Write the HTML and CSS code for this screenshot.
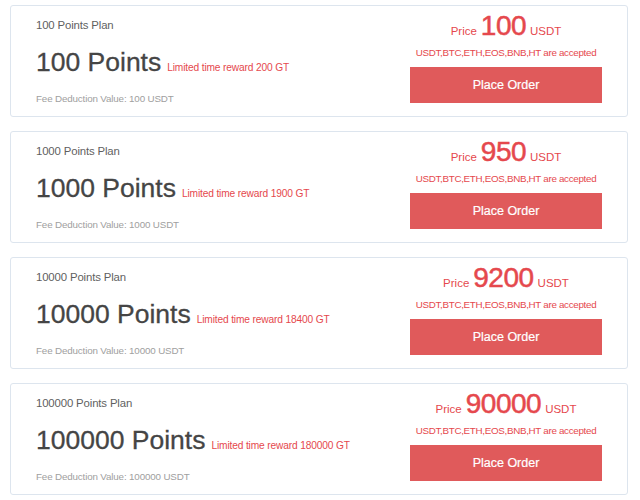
FILE: index.html
```html
<!DOCTYPE html>
<html>
<head>
<meta charset="utf-8">
<link rel="stylesheet" href="styles.css">
</head>
<body>
<div class="list">
  <div class="card">
    <div class="info">
      <div class="plan">100 Points Plan</div>
      <div class="points"><span class="pts">100 Points</span><span class="reward">Limited time reward 200 GT</span></div>
      <div class="fee">Fee Deduction Value: 100 USDT</div>
    </div>
    <div class="buy">
      <div class="price"><span class="lbl">Price</span><span class="num">100</span><span class="lbl">USDT</span></div>
      <div class="accept">USDT,BTC,ETH,EOS,BNB,HT are accepted</div>
      <button class="order">Place Order</button>
    </div>
  </div>
  <div class="card">
    <div class="info">
      <div class="plan">1000 Points Plan</div>
      <div class="points"><span class="pts">1000 Points</span><span class="reward">Limited time reward 1900 GT</span></div>
      <div class="fee">Fee Deduction Value: 1000 USDT</div>
    </div>
    <div class="buy">
      <div class="price"><span class="lbl">Price</span><span class="num">950</span><span class="lbl">USDT</span></div>
      <div class="accept">USDT,BTC,ETH,EOS,BNB,HT are accepted</div>
      <button class="order">Place Order</button>
    </div>
  </div>
  <div class="card">
    <div class="info">
      <div class="plan">10000 Points Plan</div>
      <div class="points"><span class="pts">10000 Points</span><span class="reward">Limited time reward 18400 GT</span></div>
      <div class="fee">Fee Deduction Value: 10000 USDT</div>
    </div>
    <div class="buy">
      <div class="price"><span class="lbl">Price</span><span class="num">9200</span><span class="lbl">USDT</span></div>
      <div class="accept">USDT,BTC,ETH,EOS,BNB,HT are accepted</div>
      <button class="order">Place Order</button>
    </div>
  </div>
  <div class="card">
    <div class="info">
      <div class="plan">100000 Points Plan</div>
      <div class="points"><span class="pts">100000 Points</span><span class="reward">Limited time reward 180000 GT</span></div>
      <div class="fee">Fee Deduction Value: 100000 USDT</div>
    </div>
    <div class="buy">
      <div class="price"><span class="lbl">Price</span><span class="num">90000</span><span class="lbl">USDT</span></div>
      <div class="accept">USDT,BTC,ETH,EOS,BNB,HT are accepted</div>
      <button class="order">Place Order</button>
    </div>
  </div>
</div>
</body>
</html>
```
FILE: styles.css
```css
html, body {
  margin: 0;
  padding: 0;
  background: #ffffff;
  font-family: "Liberation Sans", Arial, sans-serif;
}
.list {
  display: flex;
  flex-direction: column;
  gap: 14px;
  padding: 5px 0 0 10px;
  width: 618px;
}
.card {
  box-sizing: border-box;
  height: 112px;
  border: 1px solid #dde5ee;
  border-radius: 3px;
  display: flex;
  justify-content: space-between;
  background: #fff;
}
.info {
  padding: 11px 0 0 25px;
  display: flex;
  flex-direction: column;
}
.plan {
  font-size: 11.4px;
  letter-spacing: -0.15px;
  line-height: 16px;
  color: #5f5f5f;
}
.points {
  margin-top: 11px;
  line-height: 36px;
  height: 36px;
  white-space: nowrap;
}
.pts {
  font-size: 26.5px;
  color: #454545;
  -webkit-text-stroke: 0.3px #454545;
}
.reward {
  font-size: 10.2px;
  letter-spacing: -0.15px;
  color: #e5484d;
  margin-left: 6px;
}
.fee {
  margin-top: 12px;
  font-size: 9.8px;
  letter-spacing: -0.15px;
  line-height: 14px;
  color: #a0a0a0;
}
.buy {
  width: 192px;
  margin-right: 25px;
  padding-top: 4px;
  display: flex;
  flex-direction: column;
  align-items: center;
}
.price {
  height: 32px;
  line-height: 32px;
  color: #e5484d;
  white-space: nowrap;
}
.lbl {
  font-size: 11.5px;
}
.num {
  font-size: 28px;
  margin: 0 4px;
  letter-spacing: -0.5px;
  -webkit-text-stroke: 0.5px #e5484d;
}
.accept {
  margin-top: 4px;
  font-size: 9.8px;
  letter-spacing: -0.3px;
  line-height: 14px;
  color: #e5484d;
  white-space: nowrap;
}
.order {
  margin-top: 7px;
  width: 192px;
  height: 36px;
  border: none;
  border-radius: 0;
  background: #e05a5b;
  color: #fff;
  font-family: "Liberation Sans", Arial, sans-serif;
  font-size: 12.5px;
  -webkit-text-stroke: 0.2px #fff;
  padding: 0;
}
```
